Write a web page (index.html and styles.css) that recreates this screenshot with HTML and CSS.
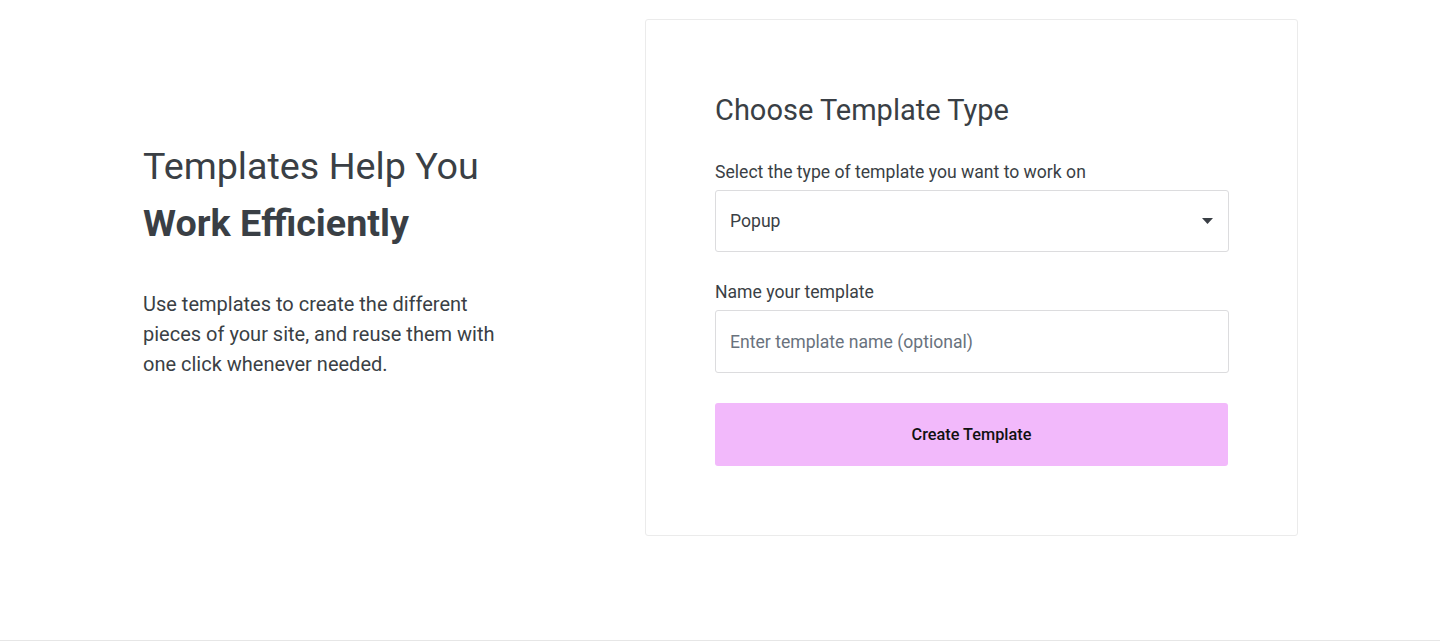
FILE: index.html
```html
<!DOCTYPE html>
<html>
<head>
<meta charset="utf-8">
<link rel="stylesheet" href="styles.css">
</head>
<body>
<main class="page">
  <section class="intro">
    <h1 class="intro-title">Templates Help You <strong>Work Efficiently</strong></h1>
    <p class="intro-text">Use templates to create the different pieces of your site, and reuse them with one click whenever needed.</p>
  </section>
  <section class="card">
    <h2 class="card-title">Choose Template Type</h2>
    <form class="form">
      <label class="field field-type">
        <span class="field-label">Select the type of template you want to work on</span>
        <span class="select">
          <span class="select-value">Popup</span>
          <svg class="select-arrow" width="11" height="6" viewBox="0 0 11 6"><path d="M0 0H11L5.5 6Z" fill="#3a3f45"/></svg>
        </span>
      </label>
      <label class="field field-name">
        <span class="field-label">Name your template</span>
        <input class="input" type="text" placeholder="Enter template name (optional)">
      </label>
      <button class="button" type="button">Create Template</button>
    </form>
  </section>
</main>
</body>
</html>
```
FILE: styles.css
```css
* { box-sizing: border-box; }
html, body { margin: 0; padding: 0; background: #fff; }
body {
  font-family: Roboto, "Liberation Sans", sans-serif;
  color: #3a3f45;
}
.page {
  height: 641px;
  border-bottom: 1px solid #e6e6e6;
  display: flex;
  align-items: flex-start;
  padding: 19px 0 0 143px;
}
.intro {
  width: 502px;
  padding-top: 119px;
  padding-right: 130px;
}
.intro-title {
  margin: 0;
  font-size: 37.7px;
  font-weight: 400;
  line-height: 57px;
}
.intro-title strong { font-weight: 700; display: block; }
.intro-text {
  margin: 37px 0 0;
  font-size: 20px;
  line-height: 30px;
}
.card {
  width: 653px;
  border: 1px solid #ebebeb;
  border-radius: 3px;
  padding: 73px 68px 69px 69px;
}
.card-title {
  margin: 0;
  font-size: 29px;
  font-weight: 400;
  line-height: 34px;
}
.form {
  display: flex;
  flex-direction: column;
  margin-top: 35px;
}
.field {
  display: flex;
  flex-direction: column;
}
.field-type { margin-bottom: 30px; }
.field-name { margin-bottom: 30px; }
.field-label {
  font-size: 17.6px;
  line-height: 20px;
  margin-bottom: 8px;
}
.select, .input {
  height: 62px;
  border: 1px solid #dcdcde;
  border-radius: 3px;
  padding: 0 15px 0 14px;
  font-family: inherit;
  font-size: 17.6px;
  color: #3a3f45;
  background: #fff;
}
.select {
  display: flex;
  align-items: center;
  justify-content: space-between;
}
.input { height: 63px; outline: none; }
.input::placeholder { color: #69727d; }
.button {
  height: 63px;
  margin-right: 1px;
  border: 0;
  border-radius: 3px;
  background: #f2b9fb;
  font-family: inherit;
  font-size: 16.3px;
  font-weight: 500;
  color: #111;
}
```
